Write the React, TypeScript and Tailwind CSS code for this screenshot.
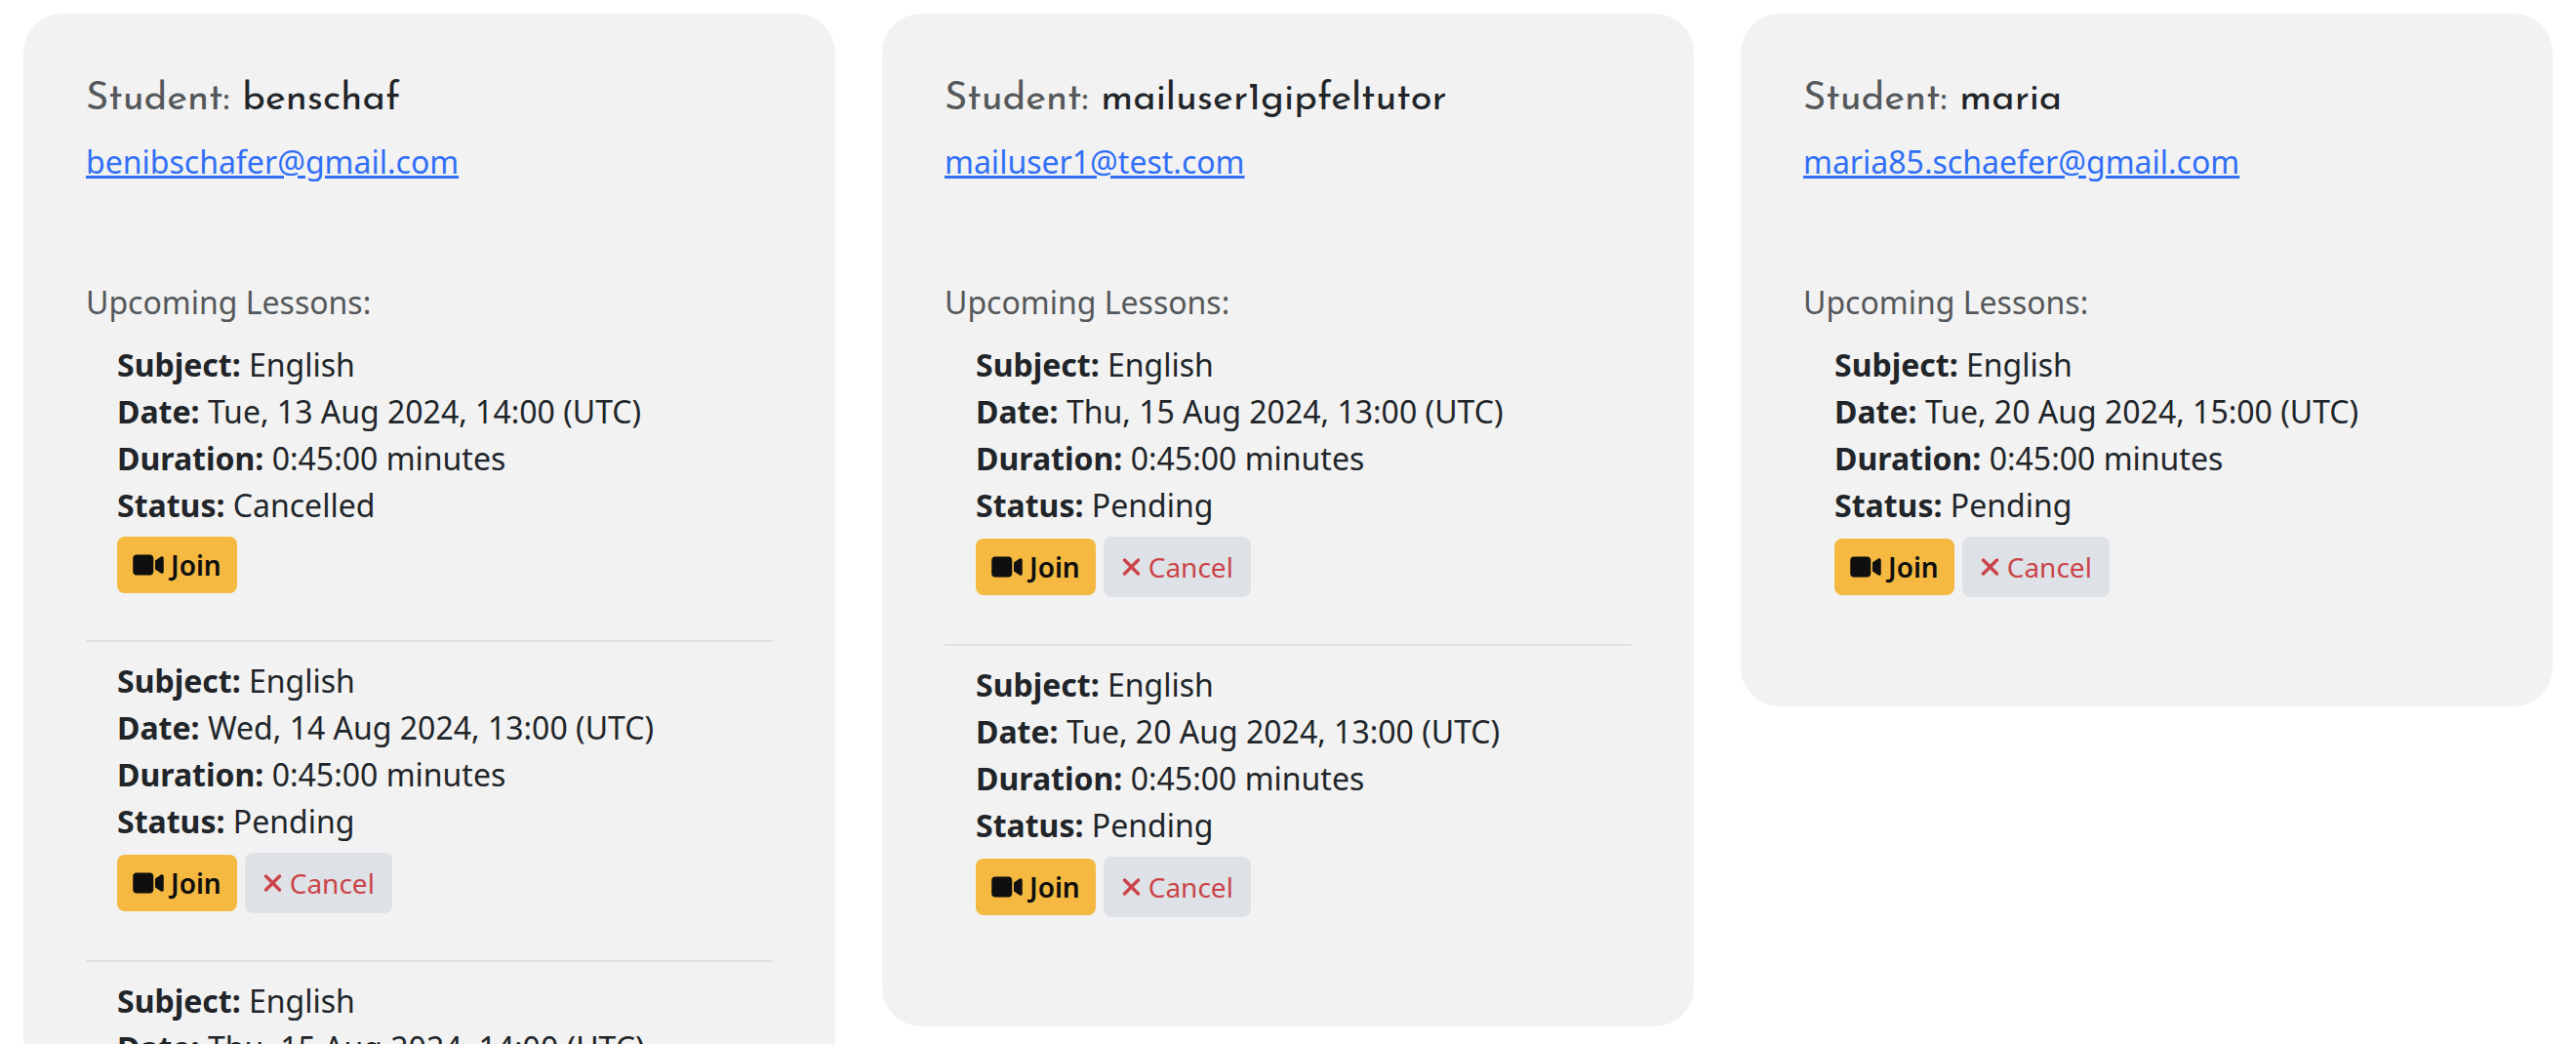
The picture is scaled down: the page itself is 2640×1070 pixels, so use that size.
import { FaVideo, FaXmark } from "react-icons/fa6";

type Lesson = {
  subject: string;
  date: string;
  duration: string;
  status: "Pending" | "Cancelled";
};

type Student = {
  name: string;
  email: string;
  lessons: Lesson[];
};

const lesson = (date: string, status: Lesson["status"] = "Pending"): Lesson => ({
  subject: "English",
  date,
  duration: "0:45:00 minutes",
  status,
});

const students: Student[] = [
  {
    name: "benschaf",
    email: "benibschafer@gmail.com",
    lessons: [
      lesson("Tue, 13 Aug 2024, 14:00 (UTC)", "Cancelled"),
      lesson("Wed, 14 Aug 2024, 13:00 (UTC)"),
      lesson("Thu, 15 Aug 2024, 14:00 (UTC)"),
    ],
  },
  {
    name: "mailuser1gipfeltutor",
    email: "mailuser1@test.com",
    lessons: [
      lesson("Thu, 15 Aug 2024, 13:00 (UTC)"),
      lesson("Tue, 20 Aug 2024, 13:00 (UTC)"),
    ],
  },
  {
    name: "maria",
    email: "maria85.schaefer@gmail.com",
    lessons: [lesson("Tue, 20 Aug 2024, 15:00 (UTC)")],
  },
];

function Field({ label, value }: { label: string; value: string }) {
  return (
    <p>
      <strong className="font-bold">{label}:</strong> {value}
    </p>
  );
}

function LessonItem({ item }: { item: Lesson }) {
  return (
    <li className="px-8 pt-4 pb-12">
      <Field label="Subject" value={item.subject} />
      <Field label="Date" value={item.date} />
      <Field label="Duration" value={item.duration} />
      <Field label="Status" value={item.status} />
      <div className="mt-2 flex items-center gap-2 text-[28px] leading-[42px]">
        <button
          type="button"
          className="flex items-center gap-[7px] rounded-lg bg-[#f5b942] px-4 py-2 font-semibold text-[#0f0f0f]"
        >
          <FaVideo className="h-7 w-8" aria-hidden="true" />
          Join
        </button>
        {item.status === "Pending" && (
          <button
            type="button"
            className="flex items-center gap-[7px] rounded-lg border-2 border-[#dee2e6] bg-[#dee2e6] px-4 py-2 text-[#cb444a]"
          >
            <FaXmark className="h-7 w-[21px]" aria-hidden="true" />
            Cancel
          </button>
        )}
      </div>
    </li>
  );
}

function StudentCard({ student }: { student: Student }) {
  return (
    <article className="rounded-[40px] bg-[#f2f2f2] p-16">
      <h2 className="mb-4 font-['Josefin_Sans',Lato,sans-serif] text-[40px] leading-[48px] font-normal">
        <span className="text-[#55585a]">Student:</span> {student.name}
      </h2>
      <a
        href={"mailto:" + student.email}
        className="text-[#306ff6] underline decoration-[3px]"
      >
        {student.email}
      </a>
      <p className="mt-24 text-[#55585a]">Upcoming Lessons:</p>
      <ul className="divide-y-2 divide-[#dee2e6]">
        {student.lessons.map((item) => (
          <LessonItem key={item.date} item={item} />
        ))}
      </ul>
    </article>
  );
}

export default function App() {
  return (
    <main className="h-screen overflow-y-auto bg-white px-6 pt-3.5 font-['Noto_Sans',sans-serif] text-[32px] leading-[48px] text-[#212529] [scrollbar-width:none]">
      <div className="grid grid-cols-3 items-start gap-12">
        {students.map((student) => (
          <StudentCard key={student.name} student={student} />
        ))}
      </div>
    </main>
  );
}
